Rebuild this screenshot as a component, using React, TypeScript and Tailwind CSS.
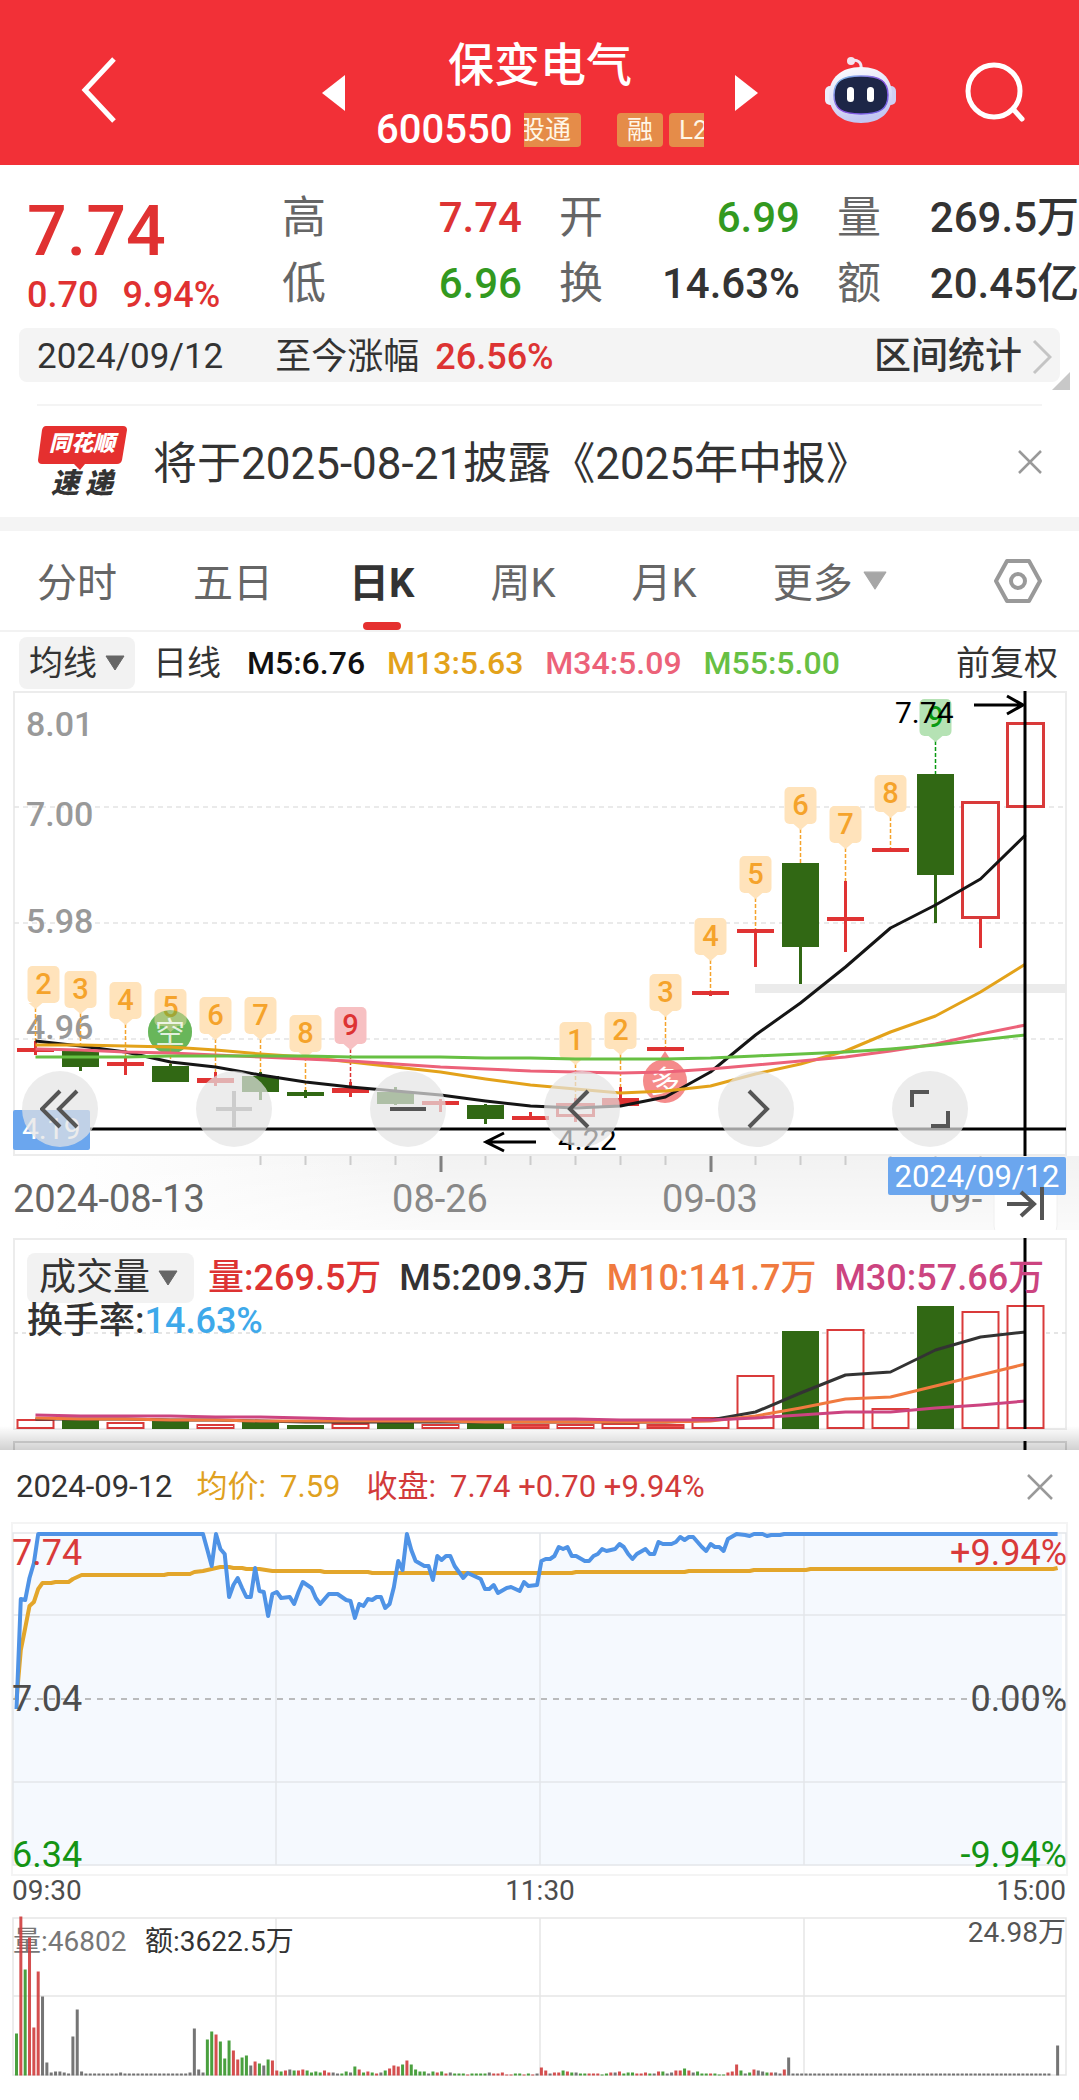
import { useState, type ReactNode } from "react";

const RED = "#d93a3a";
const GREEN = "#316814";

const TABS = ["分时", "五日", "日K", "周K", "月K"];

const QUOTES = [
  { label: "高", value: "7.74", color: "text-[#dd3333]" },
  { label: "开", value: "6.99", color: "text-[#33991f]" },
  { label: "量", value: "269.5万", color: "text-[#333333]" },
  { label: "低", value: "6.96", color: "text-[#33991f]" },
  { label: "换", value: "14.63%", color: "text-[#333333]" },
  { label: "额", value: "20.45亿", color: "text-[#333333]" },
];

const DAY_MA = [
  { text: "M5:6.76", color: "text-[#111111]" },
  { text: "M13:5.63", color: "text-[#e3a21a]" },
  { text: "M34:5.09", color: "text-[#ec6279]" },
  { text: "M55:5.00", color: "text-[#67c043]" },
];

const VOLUME_MA = [
  { text: "量:269.5万", color: "text-[#dd3333]" },
  { text: "M5:209.3万", color: "text-[#333333]" },
  { text: "M10:141.7万", color: "text-[#f07a3f]" },
  { text: "M30:57.66万", color: "text-[#cc4480]" },
];

type Kind = "up" | "down" | "flat";

// [kind, body top, body bottom, wick top, wick bottom]
const CANDLES: [Kind, number, number, number, number][] = [
  ["flat", 358, 362, 351, 365],
  ["down", 361, 377, 361, 381],
  ["flat", 372, 376, 367, 385],
  ["down", 376, 392, 374, 392],
  ["flat", 388, 393, 382, 396],
  ["down", 386, 402, 382, 410],
  ["down", 402, 406, 400, 408],
  ["flat", 398, 403, 392, 407],
  ["down", 402, 414, 397, 415],
  ["flat", 411, 415, 409, 422],
  ["down", 415, 429, 414, 434],
  ["flat", 426, 430, 422, 430],
  ["up", 413, 427, 408, 432],
  ["flat", 408, 416, 397, 416],
  ["flat", 357, 361, 357, 361],
  ["flat", 301, 305, 301, 306],
  ["flat", 239, 243, 239, 277],
  ["down", 173, 257, 173, 294],
  ["flat", 227, 231, 191, 262],
  ["flat", 158, 162, 158, 162],
  ["down", 84, 185, 84, 233],
  ["up", 111, 229, 111, 258],
  ["up", 32, 118, 32, 118],
];

const M5 = [351, 356, 362, 372, 377, 385, 392, 397, 401, 405, 411, 416, 418, 416, 407, 382, 345, 313, 277, 238, 215, 189, 145];
const M13 = [355, 355, 356, 357, 360, 364, 367, 372, 377, 382, 389, 395, 399, 403, 401, 396, 384, 374, 361, 342, 326, 302, 274];
const M34 = [359, 360, 362, 363, 365, 367, 369, 371, 374, 377, 379, 381, 382, 383, 382, 379, 375, 371, 367, 361, 354, 344, 335];
const M55 = [367, 367, 367, 366, 366, 366, 366, 367, 367, 367, 368, 368, 369, 369, 369, 368, 366, 364, 362, 359, 355, 350, 345];

// [candle index, label, box top, line end]
const MARKERS: [number, number, number, number][] = [
  [0, 2, 276, 351],
  [1, 3, 281, 361],
  [2, 4, 292, 367],
  [3, 5, 299, 374],
  [4, 6, 307, 382],
  [5, 7, 307, 382],
  [6, 8, 325, 400],
  [7, 9, 317, 392],
  [12, 1, 332, 408],
  [13, 2, 322, 397],
  [14, 3, 284, 357],
  [15, 4, 228, 301],
  [16, 5, 166, 239],
  [17, 6, 97, 173],
  [18, 7, 116, 191],
  [19, 8, 85, 158],
  [20, 9, 9, 84],
];

const VOLUMES: [Kind, number][] = [
  ["up", 189], ["down", 190], ["up", 192], ["down", 190], ["up", 194], ["down", 191],
  ["down", 195], ["up", 193], ["down", 192], ["up", 194], ["down", 192], ["flat", 194],
  ["up", 194], ["up", 193], ["flat", 194], ["up", 187], ["up", 145], ["down", 101],
  ["up", 99], ["up", 178], ["down", 76], ["up", 81], ["up", 75],
];

const V5 = [189, 189, 189, 190, 190, 191, 192, 192, 192, 192, 192, 192, 192, 192, 192, 190, 182, 163, 145, 142, 120, 107, 102];
const V10 = [188, 189, 189, 190, 190, 191, 191, 191, 191, 191, 192, 192, 192, 192, 192, 191, 186, 178, 169, 167, 156, 145, 134];
const V30 = [185, 186, 186, 186, 187, 187, 188, 189, 189, 189, 189, 189, 189, 190, 190, 190, 188, 185, 182, 182, 178, 175, 171];

// "minute,y" pairs of the intraday curves
const PRICE =
  "0,189 1,79 2,80 3,58 4,43 5,14 43,14 44,30 45,46 46,14 47,29 48,34 49,77 50,65 51,58 52,68 53,77 54,77 55,48 56,71 57,72 58,96 59,74 60,72 61,78 63,77 64,84 65,72 66,62 68,68 69,78 70,84 72,74 74,74 76,80 77,81 78,98 79,84 80,86 81,79 82,80 83,77 84,77 85,88 86,84 87,67 88,41 89,50 90,14 91,30 92,41 94,46 95,46 96,60 97,36 98,40 99,36 100,36 101,46 103,58 104,53 106,57 107,59 108,69 109,69 110,65 111,73 113,68 114,67 116,71 117,62 118,66 120,65 121,41 122,39 123,39 124,36 125,27 126,29 127,27 128,36 129,36 131,41 132,41 133,36 134,34 135,29 136,31 138,29 139,24 140,27 141,34 142,39 143,34 145,29 146,34 147,34 148,22 149,24 151,24 152,22 153,17 154,20 155,17 156,17 158,27 159,31 160,24 161,27 162,27 163,31 164,19 166,14 168,15 169,16 170,14 172,14 173,16 174,15 176,15 177,14 240,14";
const AVERAGE =
  "0,180 1,130 2,108 3,86 4,82 5,69 6,63 8,63 9,62 12,62 13,59 15,55 34,55 35,54 40,54 41,52 43,51 45,49 47,47 49,47 50,48 52,48 53,49 56,49 59,51 70,51 71,52 81,52 82,53 128,53 129,52 154,52 155,51 169,51 170,50 182,50 183,49 239,49 240,48";

// One entry a minute: colour letter and bar height
const MINUTES = (
  "g42 r159 g106 r138 r48 r104 k79 k13 k3 k4 k4 k3 k2 k39 k66 k4 k2 " +
  "k2 k2 k2 k2 k2 k2 k2 k3 k2 k2 k2 k2 k2 k2 k2 k2 k2 k2 k2 k2 k2 k2 k2 k3 k47 k6 k3 " +
  "g36 g44 r41 g34 g17 g35 r25 r16 g18 g20 k10 r14 g12 k10 g16 r15 " +
  "r5 g4 r5 k6 g5 r5 r6 g5 g3 g4 g3 r5 r3 k3 k2 g2 g4 k3 g9 r6 g3 r4 g3 r2 k3 g5 r7 r10 r9 g11 r15 g11 g6 g4 g4 " +
  "k2 g4 r3 g4 r2 k3 g2 g2 g2 r1 g2 g2 g2 g2 k3 r2 r2 r3 r1 r1 g2 g2 r1 g2 r1 k2 " +
  "r8 r5 k2 r3 r3 g5 r4 g3 k3 g2 g2 r2 r2 r2 g1 g2 r3 k3 r4 g2 g3 g3 r2 r2 r3 g2 k2 r4 g4 k2 k3 r5 r5 g7 r5 k3 g4 g2 g2 r2 g2 g1 g1 r3 r4 " +
  "r11 g5 k2 g3 r6 k5 k4 g3 r3 k3 k2 r6 k18"
).split(" ");
for (let i = MINUTES.length; i < 239; i++) MINUTES.push("k2");
MINUTES.push("k0", "k30");

const MINUTE_COLOR: Record<string, string> = { g: "#36962a", r: "#cf3c3c", k: "#666666" };

const cx = (i: number) => 35.5 + i * 45;
const mx = (i: number) => 16.5 + i * 4.338;
const dayLine = (ys: number[]) => ys.map((y, i) => `${cx(i)},${y}`).join(" ");
const minuteLine = (src: string) =>
  src
    .split(" ")
    .map((p) => {
      const [m, y] = p.split(",").map(Number);
      return `${mx(m).toFixed(1)},${y}`;
    })
    .join(" ");

function Caret({ className }: { className: string }) {
  return (
    <svg viewBox="0 0 20 16" className={className} aria-hidden="true">
      <path d="M1 1h18L10 15z" fill="currentColor" stroke="currentColor" strokeLinejoin="round" />
    </svg>
  );
}

function Picker({ label, options, className }: { label: string; options: string[]; className: string }) {
  return (
    <label className={`flex items-center rounded-lg bg-[#f2f2f2] text-[#333333] ${className}`}>
      <select aria-label={label} className="appearance-none bg-transparent outline-none">
        {options.map((o) => (
          <option key={o}>{o}</option>
        ))}
      </select>
      <Caret className="ml-2 w-5 text-[#666666]" />
    </label>
  );
}

function Robot() {
  return (
    <svg viewBox="0 0 73 68" className="w-[73px]" aria-hidden="true">
      <defs>
        <linearGradient id="shell" x1="0" y1="0" x2="0.3" y2="1">
          <stop offset="0" stopColor="#ffffff" />
          <stop offset="0.600" stopColor="#dfe0f8" />
          <stop offset="1" stopColor="#c3c6f2" />
        </linearGradient>
        <linearGradient id="rim" x1="0" y1="0" x2="1" y2="1">
          <stop offset="0" stopColor="#7fd0ea" />
          <stop offset="0.5" stopColor="#8a4fe0" />
          <stop offset="1" stopColor="#6f6be8" />
        </linearGradient>
      </defs>
      <path d="M27 5c6-2 11 1 10 8" fill="none" stroke="#efe6f4" strokeWidth="3" />
      <circle cx="27" cy="5" r="4" fill="#f3e4ef" />
      <rect x="1" y="30" width="12" height="19" rx="5" fill="#eeeefb" />
      <rect x="60" y="30" width="12" height="19" rx="5" fill="#cfcff3" />
      <path d="M37 11c20 0 31 11 31 28S57 67 37 67 5 56 5 39s12-28 32-28z" fill="url(#shell)" />
      <path d="M37 20c19 0 27 5 27 19s-8 19-27 19-27-5-27-19 8-19 27-19z" fill="#1d2647" stroke="url(#rim)" strokeWidth="1.500" />
      <rect x="23" y="31" width="7" height="15" rx="3.500" fill="#fff" />
      <rect x="43" y="31" width="7" height="15" rx="3.500" fill="#fff" />
    </svg>
  );
}

function Header() {
  return (
    <header className="flex h-[165px] items-start bg-[#f23037] pr-[54px] pl-20 text-white">
      <button aria-label="返回" className="mt-[57px]">
        <svg viewBox="0 0 36 66" className="w-9" fill="none" stroke="currentColor" strokeWidth="5">
          <path d="M34 2 5 33l29 31" />
        </svg>
      </button>
      <div className="mr-[66px] ml-auto flex items-start">
        <button aria-label="上一只" className="mt-[75px]">
          <svg viewBox="0 0 23 36" className="w-[23px]">
            <path d="M23 0v36L0 18z" fill="currentColor" />
          </svg>
        </button>
        <div className="mx-[31px] mt-[31px] w-[328px]">
          <h1 className="text-center text-[46px] leading-[68px] font-medium">保变电气</h1>
          <div className="flex h-[60px] items-center pt-0.5">
            <span className="text-[40px] leading-none font-medium">600550</span>
            <div className="ml-auto flex w-[180px] items-center overflow-hidden text-[26px] leading-[34px] text-[#fff6e6]">
              <span className="flex w-[57px] shrink-0 justify-end overflow-hidden rounded-r bg-[#e58c49] pr-2.5 whitespace-nowrap">
                股通
              </span>
              <span className="ml-9 shrink-0 rounded bg-[#e58c49] px-2.5">融</span>
              <span className="ml-1.5 shrink-0 rounded bg-[#e58c49] px-2.5">L2</span>
            </div>
          </div>
        </div>
        <button aria-label="下一只" className="mt-[75px]">
          <svg viewBox="0 0 23 36" className="w-[23px]">
            <path d="M0 0v36l23-18z" fill="currentColor" />
          </svg>
        </button>
      </div>
      <button aria-label="智能助手" className="mt-14">
        <Robot />
      </button>
      <button aria-label="搜索" className="mt-[62px] ml-[68px]">
        <svg viewBox="0 0 60 60" className="w-[60px]" fill="none" stroke="currentColor" strokeWidth="5" strokeLinecap="round">
          <circle cx="29" cy="29" r="26" />
          <path d="m48 47 9 10" />
        </svg>
      </button>
    </header>
  );
}

function QuotePanel() {
  return (
    <section className="flex h-[163px] pt-5 pl-[27px]">
      <div className="w-[255px] font-medium text-[#e03131]">
        <p className="pt-2 text-[70px] leading-[76px]">7.74</p>
        <p className="flex gap-6 pt-1.5 text-[36px] leading-10">
          <span>0.70</span>
          <span>9.94%</span>
        </p>
      </div>
      <dl className="grid flex-1 auto-rows-min grid-cols-[240px_278px_1fr] leading-[66px]">
        {QUOTES.map((q, i) => (
          <div key={q.label} className={`flex justify-between ${i % 3 === 0 ? "" : "pl-[37px]"}`}>
            <dt className="text-[44px] text-[#666666]">{q.label}</dt>
            <dd className={`text-[42px] font-medium ${q.color}`}>{q.value}</dd>
          </div>
        ))}
      </dl>
    </section>
  );
}

function RangeBar() {
  return (
    <div className="relative mx-[19px] flex h-[54px] items-center rounded-lg bg-[#f4f4f4] pt-1 pr-2 pl-[18px] text-[36px] text-[#333333]">
      <span className="text-[35px]">2024/09/12</span>
      <span className="ml-[52px]">至今涨幅</span>
      <span className="ml-4 font-medium text-[#dd3333]">26.56%</span>
      <button className="ml-auto flex items-center gap-2.5 text-[37px] font-medium">
        区间统计
        <svg viewBox="0 0 20 36" className="w-5" fill="none" stroke="#c4c4c4" strokeWidth="3">
          <path d="m2 2 16 16L2 34" />
        </svg>
      </button>
      <svg viewBox="0 0 18 18" className="absolute -right-2.5 -bottom-2 w-[18px]" aria-hidden="true">
        <path d="M18 0v18H0z" fill="#c8c8c8" />
      </svg>
    </div>
  );
}

function News() {
  return (
    <section className="mt-[22px] h-[113px] px-[37px]">
      <div className="flex h-full items-center border-t-2 border-[#f4f4f4]">
        <div className="relative w-[90px] shrink-0">
          <svg viewBox="0 0 90 44" className="w-[90px]" aria-hidden="true">
            <path d="M9 0h77q4 0 4 4l-5 30q-1 4-5 4H48l-5 6-6-6H5q-4 0-4-4L5 4q1-4 4-4z" fill="#e5302f" />
          </svg>
          <span className="absolute inset-x-0 top-0 text-center text-[22px] leading-9 font-black text-white italic">同花顺</span>
          <span className="flex justify-center gap-1.5 text-[28px] leading-[28px] font-black text-[#333333] italic">
            <span>速</span>
            <span>递</span>
          </span>
        </div>
        <a href="#report" className="ml-[26px] pt-1 text-[44px] leading-none text-[#333333]">
          将于2025-08-21披露《2025年中报》
        </a>
        <button aria-label="关闭公告" className="ml-auto">
          <svg viewBox="0 0 24 24" className="w-6" stroke="#999999" strokeWidth="2.500">
            <path d="m1 1 22 22M23 1 1 23" />
          </svg>
        </button>
      </div>
    </section>
  );
}

function PeriodTabs() {
  const [tab, setTab] = useState("日K");
  return (
    <nav className="flex h-[101px] items-center border-b-2 border-[#f2f2f2] px-[37px] text-[40px] text-[#666666]">
      <div className="flex h-full gap-[76px]">
        {TABS.map((t) => (
          <button key={t} onClick={() => setTab(t)} className={`relative h-full pt-1.5 ${t === tab ? "font-bold text-[#333333]" : ""}`}>
            {t}
            {t === tab && <span className="absolute bottom-0 left-1/2 h-2 w-[38px] -translate-x-1/2 rounded bg-[#e5302f]" />}
          </button>
        ))}
        <label className="flex items-center">
          <select aria-label="更多周期" className="appearance-none bg-transparent pt-1.5 outline-none">
            <option>更多</option>
          </select>
          <Caret className="ml-2.5 w-6 text-[#a6a6a6]" />
        </label>
      </div>
      <button aria-label="图表设置" className="ml-auto">
        <svg viewBox="0 0 48 46" className="w-12" fill="none" stroke="#999999" strokeWidth="4" strokeLinejoin="round">
          <path d="M13 3h22l11 20-11 20H13L2 23z" />
          <circle cx="24" cy="23" r="7" />
        </svg>
      </button>
    </nav>
  );
}

function Marker({ i, n, top, end }: { i: number; n: number; top: number; end: number }) {
  const x = cx(i);
  const mid = i === 0 ? x + 8 : x;
  let fill = "#ffe3bb";
  let color = "#f5a32b";
  if (n === 9) {
    fill = i === 20 ? "#b5e2b4" : "#f7c0c2";
    color = i === 20 ? "#0a9a12" : "#dd3333";
  }
  return (
    <g>
      <path d={`M${x} ${top + 42}V${end}`} stroke={color} strokeWidth="1.500" strokeDasharray="4 2" />
      <rect x={mid - 16} y={top} width="32" height="37" rx="5" fill={fill} />
      <path d={`M${x - 7} ${top + 37}h14l-7 6z`} fill={fill} />
      <text x={mid} y={top + 28} textAnchor="middle" fontSize="29" fontWeight="500" fill={color}>
        {n}
      </text>
    </g>
  );
}

function ToolButton({ label, muted, children }: { label: string; muted?: boolean; children: ReactNode }) {
  return (
    <button aria-label={label} className="flex size-[76px] items-center justify-center rounded-full bg-[#e4e4e4]/70">
      <svg viewBox="0 0 40 40" className="w-10" fill="none" stroke={muted ? "#cccccc" : "#555555"} strokeWidth="4">
        {children}
      </svg>
    </button>
  );
}

function DayChart() {
  return (
    <div className="relative">
      <svg viewBox="0 0 1079 540" className="block w-full" role="img" aria-label="日K线图">
        <defs>
          <linearGradient id="axisX" x1="0" x2="1" y1="0" y2="0">
            <stop offset="0.050" stopColor="#f5f5f5" stopOpacity="0" />
            <stop offset="0.400" stopColor="#f2f2f2" />
          </linearGradient>
          <linearGradient id="axisY" x1="0" x2="0" y1="0" y2="1">
            <stop offset="0" stopColor="#ffffff" stopOpacity="0" />
            <stop offset="1" stopColor="#ffffff" stopOpacity="0.700" />
          </linearGradient>
        </defs>
        <rect x="0" y="466" width="1079" height="80" fill="url(#axisX)" />
        <rect x="0" y="466" width="1079" height="80" fill="url(#axisY)" />
        <rect x="14" y="2" width="1052" height="463" fill="none" stroke="#ececec" strokeWidth="2" />
        {[117, 233, 349].map((y) => (
          <path key={y} d={`M14 ${y}H1066`} stroke="#e4e4e4" strokeWidth="1.500" strokeDasharray="5 4" />
        ))}
        <rect x="755" y="294" width="311" height="9" fill="#ebebeb" />

        <g fill="#999999" fontSize="34" fontWeight="500">
          <text x="26" y="46">8.01</text>
          <text x="26" y="136">7.00</text>
          <text x="26" y="243">5.98</text>
          <text x="26" y="349">4.96</text>
        </g>

        {CANDLES.map(([kind, top, bottom, high, low], i) => (
          <g key={i} fill={kind === "down" ? GREEN : "#e03333"}>
            {high < top && <rect x={cx(i) - 1.5} y={high} width="3" height={top - high} />}
            {low > bottom && <rect x={cx(i) - 1.5} y={bottom} width="3" height={low - bottom} />}
            {kind === "up" ? (
              <rect x={cx(i) - 18} y={top + 1.5} width="36" height={bottom - top - 3} fill="#ffffff" stroke={RED} strokeWidth="3" />
            ) : (
              <rect x={cx(i) - 18.5} y={top} width="37" height={bottom - top} />
            )}
          </g>
        ))}

        <circle cx="170" cy="342" r="22" fill="#80c377" />
        <g fill="#f58b8b">
          <path d="M658 372h14l-7-11z" />
          <circle cx="665" cy="391" r="22" />
        </g>
        <text x="665" y="402" textAnchor="middle" fontSize="30" fill="#ffffff">多</text>

        {MARKERS.map(([i, n, top, end]) => (
          <Marker key={i} i={i} n={n} top={top} end={end} />
        ))}
        <circle cx="170" cy="342" r="22" fill="#4faa3d" opacity="0.500" />
        <text x="170" y="353" textAnchor="middle" fontSize="30" fill="#ffffff" opacity="0.800">空</text>

        <g fill="none" strokeWidth="3" strokeLinejoin="round">
          <polyline points={dayLine(M5)} stroke="#151515" />
          <polyline points={dayLine(M13)} stroke="#e3a21a" />
          <polyline points={dayLine(M34)} stroke="#ec6279" />
          <polyline points={dayLine(M55)} stroke="#67c043" />
        </g>

        <g fill="none" stroke="#000000" strokeWidth="3">
          <path d="M13 439H1066" />
          <path d="M536 452H486M504 443l-18 9 18 9" />
          <path d="M974 15h49M1007 6l16 9-16 9" />
        </g>
        <text x="558" y="460" fontSize="30">4.22</text>
        <text x="895" y="33" fontSize="30">7.74</text>
        <rect x="13" y="420" width="77" height="40" rx="2" fill="#6ba6ee" />
        <text x="22" y="449" fontSize="30" fill="#ffffff">4.19</text>

        {Array.from({ length: 17 }, (_, k) => k + 5).map((i) => (
          <rect
            key={i}
            x={cx(i) - 1}
            y="466"
            width={i === 9 || i === 15 ? 3 : 2}
            height={i === 9 || i === 15 ? 16 : 9}
            fill={i === 9 || i === 15 ? "#808080" : "#cccccc"}
          />
        ))}
        <g fontSize="38" fill="#888888">
          <text x="13" y="522" fill="#666666">2024-08-13</text>
          <text x="440" y="522" textAnchor="middle">08-26</text>
          <text x="710" y="522" textAnchor="middle">09-03</text>
          <text x="929" y="522">09-</text>
        </g>
        <rect x="994" y="480" width="63" height="66" rx="10" fill="#ffffff" stroke="#f0f0f0" />
        <rect x="888" y="467" width="178" height="38" rx="2" fill="#6ba6ee" />
        <text x="977" y="497" textAnchor="middle" fontSize="31" fill="#ffffff">2024/09/12</text>
        <path d="M1007 514h27M1021 502l13 12-13 12M1042 497v33" fill="none" stroke="#555555" strokeWidth="4" />
        <path d="M1025 1v465" stroke="#000000" strokeWidth="3" />
      </svg>
      <div className="absolute top-[381px] right-[111px] left-[22px] flex justify-between">
        <ToolButton label="最早">
          <path d="M20 2 2 20l18 18M37 2 19 20l18 18" />
        </ToolButton>
        <ToolButton label="放大" muted>
          <path d="M2 20h36M20 2v36" />
        </ToolButton>
        <ToolButton label="缩小">
          <path d="M2 20h36" />
        </ToolButton>
        <ToolButton label="左移">
          <path d="M26 2 8 20l18 18" />
        </ToolButton>
        <ToolButton label="右移">
          <path d="m13 2 18 18-18 18" />
        </ToolButton>
        <ToolButton label="全屏">
          <path d="M2 18V3h17M38 22v15H21" />
        </ToolButton>
      </div>
    </div>
  );
}

function VolumeChart() {
  return (
    <div className="relative">
      <svg viewBox="0 0 1079 220" className="block w-full" role="img" aria-label="成交量图">
        <defs>
          <linearGradient id="sheetShade" x1="0" x2="0" y1="0" y2="1">
            <stop offset="0" stopColor="#000000" stopOpacity="0" />
            <stop offset="1" stopColor="#000000" stopOpacity="0.180" />
          </linearGradient>
        </defs>
        <rect x="14" y="9" width="1052" height="190" fill="none" stroke="#ececec" strokeWidth="2" />
        <path d="M14 103H1066" stroke="#dddddd" strokeWidth="1.500" strokeDasharray="4 4" />
        {VOLUMES.map(([kind, top], i) =>
          kind === "down" ? (
            <rect key={i} x={cx(i) - 18.5} y={top} width="37" height={199 - top} fill={GREEN} />
          ) : (
            <rect
              key={i}
              x={cx(i) - 18}
              y={top + 1}
              width="36"
              height={197 - top}
              fill={kind === "flat" ? "#ef5050" : "#ffffff"}
              stroke={RED}
              strokeWidth="2"
            />
          ),
        )}
        <g fill="none" strokeWidth="3" strokeLinejoin="round">
          <polyline points={dayLine(V5)} stroke="#333333" />
          <polyline points={dayLine(V10)} stroke="#f07a3f" />
          <polyline points={dayLine(V30)} stroke="#cc4480" />
        </g>
        <path d="M14 220v-8h1052v8" fill="none" stroke="#dddddd" strokeWidth="2" />
        <path d="M1025 8v191M1025 211v9" stroke="#000000" strokeWidth="3" />
        <rect x="0" y="196" width="1079" height="24" fill="url(#sheetShade)" />
      </svg>
      <div className="absolute top-[21px] left-[27px] text-[36px] font-medium">
        <div className="flex h-[50px] items-center gap-[18px] pt-1 whitespace-nowrap">
          <Picker label="副图指标" options={["成交量"]} className="-mr-1 h-[50px] pr-4 pl-3 text-[37px] font-normal" />
          {VOLUME_MA.map((m) => (
            <span key={m.text} className={m.color}>
              {m.text}
            </span>
          ))}
        </div>
        <p className="pt-0.5 leading-[36px] text-[#333333]">
          换手率:<span className="text-[#3ea9ea]">14.63%</span>
        </p>
      </div>
    </div>
  );
}

function IntradaySheet() {
  const price = minuteLine(PRICE);
  return (
    <section className="bg-white">
      <div className="flex h-[70px] items-center pt-1 pr-[26px] pl-4 text-[31px] text-[#333333]">
        <span>2024-09-12</span>
        <span className="ml-[24px] flex gap-3.5 text-[#dfa11f]">
          <span>均价:</span>
          <span>7.59</span>
        </span>
        <span className="ml-[26px] flex gap-3.5 text-[#d23a3a]">
          <span>收盘:</span>
          <span>7.74 +0.70 +9.94%</span>
        </span>
        <button aria-label="关闭分时" className="ml-auto">
          <svg viewBox="0 0 26 26" className="w-[26px]" stroke="#999999" strokeWidth="2.500">
            <path d="m1 1 24 24M25 1 1 25" />
          </svg>
        </button>
      </div>

      <svg viewBox="0 0 1079 390" className="block w-full" role="img" aria-label="分时走势图">
        <rect x="12" y="3" width="1055" height="352" fill="none" stroke="#f4f4f4" strokeWidth="2" />
        <polygon points={`13,345 13,189 ${price} 1062,14 1062,345`} fill="#f5f9fe" />
        <g stroke="#e3e6ea" strokeWidth="1.500" fill="none">
          <rect x="13" y="13" width="1053" height="332" />
          <path d="M276 13v332M540 13v332M804 13v332M13 95H1066M13 262H1066" />
        </g>
        <path d="M13 179H1066" stroke="#a6a6a6" strokeWidth="1.500" strokeDasharray="6 6" />
        <polyline points={minuteLine(AVERAGE)} fill="none" stroke="#e3a62b" strokeWidth="4" strokeLinejoin="round" />
        <polyline points={price} fill="none" stroke="#4f93e6" strokeWidth="4" strokeLinejoin="round" />
        <g fontSize="36">
          <text x="12" y="45" fill="#d93a3a">7.74</text>
          <text x="12" y="191" fill="#4d4d4d">7.04</text>
          <text x="12" y="347" fill="#149414">6.34</text>
          <g textAnchor="end">
            <text x="1067" y="45" fill="#d93a3a">+9.94%</text>
            <text x="1067" y="191" fill="#4d4d4d">0.00%</text>
            <text x="1067" y="347" fill="#149414">-9.94%</text>
          </g>
        </g>
        <g fontSize="28" fill="#4d4d4d">
          <text x="12" y="380">09:30</text>
          <text x="540" y="380" textAnchor="middle">11:30</text>
          <text x="1066" y="380" textAnchor="end">15:00</text>
        </g>
      </svg>

      <svg viewBox="0 0 1079 190" className="block w-full" role="img" aria-label="分时成交量图">
        <g stroke="#e6e6e6" strokeWidth="1.500" fill="none">
          <rect x="13" y="8" width="1053" height="157" />
          <path d="M276 8v157M540 8v157M804 8v157M13 86H1066" />
        </g>
        <g fontSize="28">
          <text x="13" y="41" fill="#777777">量:46802</text>
          <text x="145" y="41" fill="#333333">额:3622.5万</text>
          <text x="1066" y="32" fill="#555555" textAnchor="end">24.98万</text>
        </g>
        {MINUTES.map((m, i) => {
          const h = Number(m.slice(1));
          return <rect key={i} x={mx(i) - 1.5} y={165.5 - h} width="3" height={h} fill={MINUTE_COLOR[m[0]]} opacity="0.900" />;
        })}
      </svg>
    </section>
  );
}

export default function App() {
  return (
    <main className="w-full overflow-hidden bg-white font-[Roboto,'Noto_Sans_CJK_SC',sans-serif]">
      <Header />
      <QuotePanel />
      <RangeBar />
      <News />
      <div className="h-3.5 bg-[#f4f4f4]" />
      <PeriodTabs />
      <div className="flex h-[58px] items-center gap-[22px] pt-1 pr-[21px] pl-[19px] text-[34px] text-[#333333]">
        <Picker label="主图指标" options={["均线"]} className="-mr-1 h-[52px] px-2.5" />
        <span className="mr-1">日线</span>
        {DAY_MA.map((m) => (
          <span key={m.text} className={`text-[32px] font-medium ${m.color}`}>
            {m.text}
          </span>
        ))}
        <button className="ml-auto">前复权</button>
      </div>
      <DayChart />
      <VolumeChart />
      <IntradaySheet />
    </main>
  );
}
